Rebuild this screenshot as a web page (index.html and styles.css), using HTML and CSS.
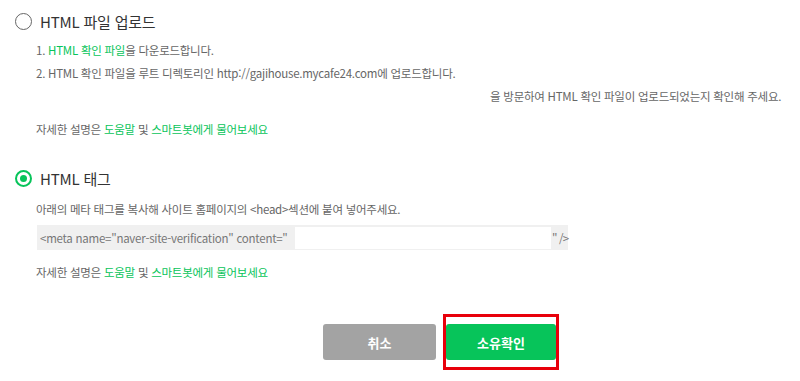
FILE: index.html
```html
<!DOCTYPE html>
<html lang="ko">
<head>
<meta charset="utf-8">
<link rel="stylesheet" href="styles.css">
</head>
<body>
<div class="page">
  <div class="option">
    <div class="radio-row">
      <span class="radio"></span>
      <span class="label">HTML 파일 업로드</span>
    </div>
    <div class="steps">
      <p class="line">1. <span class="green">HTML 확인 파일</span>을 다운로드합니다.</p>
      <p class="line">2. HTML 확인 파일을 루트 디렉토리인 http://gajihouse.mycafe24.com에 업로드합니다.</p>
      <p class="line indent">을 방문하여 HTML 확인 파일이 업로드되었는지 확인해 주세요.</p>
    </div>
    <p class="line help">자세한 설명은 <span class="green">도움말</span> 및 <span class="green">스마트봇에게 물어보세요</span></p>
  </div>

  <div class="option second">
    <div class="radio-row">
      <span class="radio checked"></span>
      <span class="label">HTML 태그</span>
    </div>
    <p class="line desc">아래의 메타 태그를 복사해 사이트 홈페이지의 &lt;head&gt;섹션에 붙여 넣어주세요.</p>
    <div class="meta-box">
      <span class="meta-text meta-start">&lt;meta name="naver-site-verification" content="</span>
      <span class="meta-value"></span>
      <span class="meta-text meta-end">" /&gt;</span>
    </div>
    <p class="line help2">자세한 설명은 <span class="green">도움말</span> 및 <span class="green">스마트봇에게 물어보세요</span></p>
  </div>

  <div class="actions">
    <button class="btn cancel">취소</button>
    <div class="highlight">
      <button class="btn confirm">소유확인</button>
    </div>
  </div>
</div>
</body>
</html>
```
FILE: styles.css
```css
html, body {
  margin: 0;
  padding: 0;
  background: #fff;
}
body {
  font-family: "Noto Sans CJK KR", "Noto Sans", sans-serif;
  color: #666;
}
.page {
  padding-top: 9px;
}
.radio-row {
  display: flex;
  align-items: center;
  gap: 8px;
  padding-left: 15px;
  height: 24px;
}
.radio {
  box-sizing: border-box;
  width: 17px;
  height: 17px;
  border-radius: 50%;
  border: 1.5px solid #666;
  display: flex;
  align-items: center;
  justify-content: center;
}
.radio.checked {
  border: 2px solid #07c45a;
}
.radio.checked::after {
  content: "";
  width: 7px;
  height: 7px;
  border-radius: 50%;
  background: #07c45a;
}
.label {
  font-size: 15px;
  color: #333;
  letter-spacing: -0.2px;
}
.steps {
  margin-top: 6px;
}
.line {
  margin: 0;
  padding-left: 36px;
  font-size: 11.5px;
  line-height: 23px;
  color: #666;
  letter-spacing: -0.25px;
  white-space: nowrap;
}
.line.indent {
  padding-left: 490px;
}
.help {
  margin-top: 10px;
}
.green {
  color: #07c45a;
}
.second {
  margin-top: 25px;
}
.desc {
  margin-top: 8px;
}
.meta-box {
  margin: 4px 0 0 37px;
  width: 531px;
  height: 25px;
  box-sizing: border-box;
  background: #f0f0f0;
  display: flex;
  align-items: center;
  padding-left: 3px;
  font-size: 11.5px;
  color: #777;
  letter-spacing: -0.25px;
  white-space: nowrap;
}
.meta-text {
  flex: none;
}
.meta-start {
  width: 255px;
  overflow: hidden;
}
.meta-value {
  flex: none;
  width: 256px;
  height: 22px;
  background: #fff;
  margin-right: 1px;
}
.meta-end {
  letter-spacing: -0.8px;
}
.help2 {
  margin-top: 11px;
}
.actions {
  display: flex;
  align-items: center;
  padding-left: 323px;
  margin-top: 30px;
  gap: 7px;
}
.btn {
  border: none;
  border-radius: 3px;
  height: 36px;
  color: #fff;
  font-family: "Noto Sans CJK KR", sans-serif;
  font-size: 13px;
  font-weight: bold;
}
.cancel {
  width: 113px;
  background: #a3a3a3;
}
.highlight {
  border: 3px solid #e8000b;
  padding: 7px 0;
  display: flex;
}
.confirm {
  width: 110px;
  background: #07c45a;
}
```
